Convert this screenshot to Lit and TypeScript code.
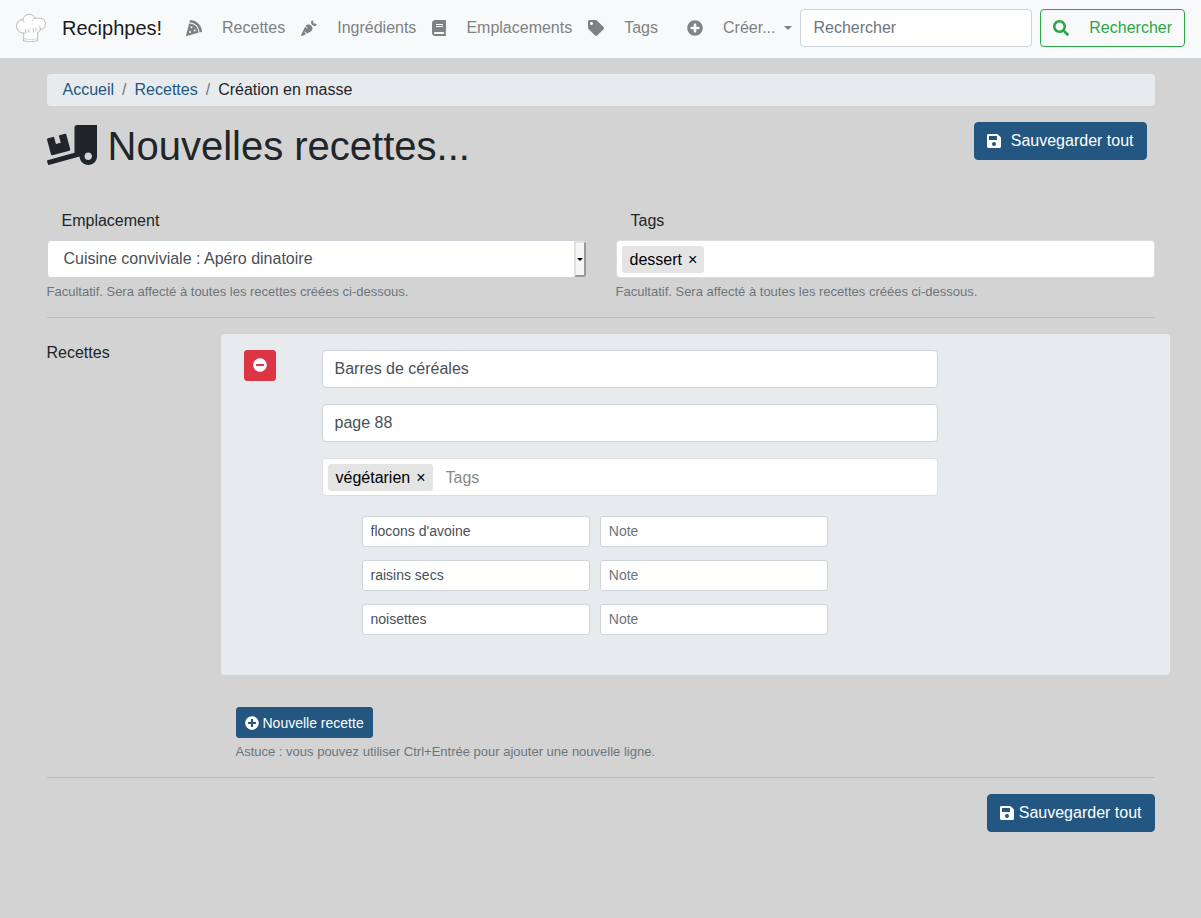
import { LitElement, html, css, svg } from "lit";
import { customElement, property, state } from "lit/decorators.js";

interface Glyph {
  width: number;
  path: string;
}

const GLYPHS: Record<string, Glyph> = {
  pizza: {
    width: 512,
    path: "M158.87.15c-16.16-1.52-31.2 8.42-35.33 24.12l-14.81 56.27c187.62 5.49 314.54 130.61 322.48 317l56.94-15.78c15.72-4.36 25.49-19.68 23.62-35.9C490.89 165.08 340.78 17.32 158.87.15zm-58.47 112L.55 491.64a16.21 16.21 0 0 0 20 19.75l379-105.1c-4.27-174.89-123.08-292.14-299.15-294.1zM128 416a32 32 0 1 1 32-32 32 32 0 0 1-32 32zm48-152a32 32 0 1 1 32-32 32 32 0 0 1-32 32zm104 104a32 32 0 1 1 32-32 32 32 0 0 1-32 32z",
  },
  carrot: {
    width: 512,
    path: "M298.2 156.6c-52.7-25.7-114.5-10.5-150.2 32.8l55.2 55.2c6.3 6.3 6.3 16.4 0 22.6-3.1 3.1-7.2 4.7-11.3 4.7s-8.2-1.6-11.3-4.7L130.4 217 2.3 479.7c-2.9 6-3.1 13.3 0 19.7 5.4 11.1 18.9 15.7 30 10.3l133.6-65.2-49.2-49.2c-6.3-6.2-6.3-16.4 0-22.6 6.3-6.2 16.4-6.2 22.6 0l57 57 102-49.8c24-11.7 44.5-31.3 57.1-57.1 30.1-61.7 4.5-136.1-57.2-166.2zm92.1-34.9C409.8 81 399.7 32.9 360 0c-50.3 41.7-52.5 107.5-7.9 151.9l8 8c44.4 44.6 110.3 42.4 151.9-7.9-32.9-39.7-81-49.8-121.7-30.3z",
  },
  book: {
    width: 448,
    path: "M448 360V24c0-13.3-10.7-24-24-24H96C43 0 0 43 0 96v320c0 53 43 96 96 96h328c13.3 0 24-10.7 24-24v-16c0-7.5-3.5-14.3-8.9-18.7-4.2-15.4-4.2-59.3 0-74.7 5.4-4.3 8.9-11.1 8.9-18.6zM128 134c0-3.3 2.7-6 6-6h212c3.3 0 6 2.7 6 6v20c0 3.3-2.7 6-6 6H134c-3.3 0-6-2.7-6-6v-20zm0 64c0-3.3 2.7-6 6-6h212c3.3 0 6 2.7 6 6v20c0 3.3-2.7 6-6 6H134c-3.3 0-6-2.7-6-6v-20zm253.4 250H96c-17.7 0-32-14.3-32-32 0-17.6 14.4-32 32-32h285.4c-1.9 17.1-1.9 46.9 0 64z",
  },
  tag: {
    width: 512,
    path: "M0 252.118V48C0 21.49 21.49 0 48 0h204.118a48 48 0 0 1 33.941 14.059l211.882 211.882c18.745 18.745 18.745 49.137 0 67.882L293.823 497.941c-18.745 18.745-49.137 18.745-67.882 0L14.059 286.059A48 48 0 0 1 0 252.118zM112 64c-26.51 0-48 21.49-48 48s21.49 48 48 48 48-21.49 48-48-21.49-48-48-48z",
  },
  plus: {
    width: 512,
    path: "M256 8C119 8 8 119 8 256s111 248 248 248 248-111 248-248S393 8 256 8zm144 276c0 6.6-5.4 12-12 12h-92v92c0 6.6-5.4 12-12 12h-56c-6.6 0-12-5.4-12-12v-92h-92c-6.6 0-12-5.4-12-12v-56c0-6.6 5.4-12 12-12h92v-92c0-6.6 5.4-12 12-12h56c6.6 0 12 5.4 12 12v92h92c6.6 0 12 5.4 12 12v56z",
  },
  minus: {
    width: 512,
    path: "M256 8C119 8 8 119 8 256s111 248 248 248 248-111 248-248S393 8 256 8zM124 296c-6.6 0-12-5.4-12-12v-56c0-6.6 5.4-12 12-12h264c6.6 0 12 5.4 12 12v56c0 6.6-5.4 12-12 12H124z",
  },
  search: {
    width: 512,
    path: "M505 442.7L405.3 343c-4.5-4.5-10.6-7-17-7H372c27.6-35.3 44-79.7 44-128C416 93.1 322.9 0 208 0S0 93.1 0 208s93.1 208 208 208c48.3 0 92.7-16.4 128-44v16.3c0 6.4 2.5 12.5 7 17l99.7 99.7c9.4 9.4 24.6 9.4 33.9 0l28.3-28.3c9.4-9.4 9.4-24.6.1-34zM208 336c-70.7 0-128-57.2-128-128 0-70.7 57.2-128 128-128 70.7 0 128 57.2 128 128 0 70.7-57.2 128-128 128z",
  },
  save: {
    width: 448,
    path: "M433.941 129.941l-83.882-83.882A48 48 0 0 0 316.118 32H48C21.49 32 0 53.49 0 80v352c0 26.51 21.49 48 48 48h352c26.51 0 48-21.49 48-48V163.882a48 48 0 0 0-14.059-33.941zM224 416c-35.346 0-64-28.654-64-64 0-35.346 28.654-64 64-64s64 28.654 64 64c0 35.346-28.654 64-64 64zm96-304.52V212c0 6.627-5.373 12-12 12H76c-6.627 0-12-5.373-12-12V108c0-6.627 5.373-12 12-12h228.52c3.183 0 6.235 1.264 8.485 3.515l3.48 3.48A11.996 11.996 0 0 1 320 111.48z",
  },
  truck: {
    width: 640,
    path: "M50.2 375.6c2.3 8.5 11.1 13.6 19.6 11.3l216.4-58c8.5-2.3 13.6-11.1 11.3-19.6l-49.7-185.5c-2.3-8.5-11.1-13.6-19.6-11.3L151 133.3l24.8 92.7-61.8 16.5-24.8-92.7-77.3 20.7C3.4 172.8-1.7 181.6.6 190.1l49.6 185.5zM384 0c-17.7 0-32 14.3-32 32v323.6L5.9 450c-4.3 1.2-6.8 5.6-5.6 9.8l12.6 46.3c1.2 4.3 5.6 6.8 9.8 5.6l393.7-107.4C418.8 464.1 467.6 512 528 512c61.9 0 112-50.1 112-112V0H384zm144 448c-26.5 0-48-21.5-48-48s21.5-48 48-48 48 21.5 48 48-21.5 48-48 48z",
  },
};

/* Solid glyph that scales with the font size of its parent. */
@customElement("app-icon")
class AppIcon extends LitElement {
  static styles = css`
    :host {
      display: inline-flex;
      flex: none;
    }
    svg {
      display: block;
      height: 1em;
      fill: currentColor;
    }
  `;

  @property() name = "plus";

  render() {
    const glyph = GLYPHS[this.name];
    return html`<svg viewBox="0 0 ${glyph.width} 512" aria-hidden="true">
      ${svg`<path d=${glyph.path}></path>`}
    </svg>`;
  }
}

/* Shared rules: resets, text boxes and buttons. */
const shared = css`
  * {
    box-sizing: border-box;
  }
  input,
  select,
  button {
    font: inherit;
    margin: 0;
  }
  a {
    text-decoration: none;
  }
  .control {
    display: block;
    width: 100%;
    height: 38px;
    padding: 6px 12px;
    color: #495057;
    background: #fff;
    border: 1px solid #ced4da;
    border-radius: 4px;
    outline-color: #80bdff;
  }
  .control::placeholder {
    color: #6c757d;
    opacity: 1;
  }
  .control.small {
    height: 31px;
    padding: 3px 8px 5px;
    font-size: 14px;
    border-radius: 3px;
  }
  .btn {
    display: inline-flex;
    align-items: center;
    height: 38px;
    padding: 0 12px;
    border: 1px solid transparent;
    border-radius: 4px;
    cursor: pointer;
    white-space: nowrap;
  }
  .btn.primary {
    color: #fff;
    background: #235681;
    border-color: #235681;
    gap: 5px;
  }
  .btn.danger {
    color: #fff;
    background: #dc3545;
    border-color: #dc3545;
  }
  .btn.success {
    color: #28a745;
    background: transparent;
    border-color: #28a745;
    gap: 20px;
  }
  .btn.small {
    height: 31px;
    padding: 0 8px;
    gap: 4px;
    font-size: 14px;
    border-radius: 3px;
  }
  .btn.danger.small {
    padding-bottom: 2px;
  }
`;

/* Text box holding removable chips. */
@customElement("tag-box")
class TagBox extends LitElement {
  static styles = [
    shared,
    css`
      :host {
        display: block;
      }
      .box {
        display: flex;
        align-items: center;
        height: 38px;
        padding: 0 5px;
        gap: 5px;
        background: #fff;
        border: 1px solid #dcdee1;
        border-radius: 4px;
      }
      .chip {
        display: flex;
        align-items: center;
        height: 27px;
        padding: 1px 7px 0 8px;
        gap: 6px;
        color: #000;
        background: #e4e4e4;
        border-radius: 3px;
      }
      .remove {
        padding: 0;
        border: 0;
        background: none;
        color: inherit;
        cursor: pointer;
      }
      .entry {
        flex: 1;
        min-width: 0;
        padding: 1px 8px 0;
        border: 0;
        outline: 0;
        background: none;
      }
      .entry::placeholder {
        color: #888;
        opacity: 1;
      }
    `,
  ];

  @property({ attribute: false }) tags: string[] = [];
  @property() placeholder = "";

  private remove(tag: string) {
    this.tags = this.tags.filter((other) => other !== tag);
  }

  render() {
    return html`<div class="box">
      ${this.tags.map(
        (tag) => html`<span class="chip"
          >${tag}<button
            class="remove"
            type="button"
            aria-label="Retirer ${tag}"
            @click=${() => this.remove(tag)}
          >
            ×
          </button></span
        >`
      )}
      <input class="entry" type="text" aria-label="Tags" placeholder=${this.placeholder} />
    </div>`;
  }
}

@customElement("nav-bar")
class NavBar extends LitElement {
  static styles = [
    shared,
    css`
      :host {
        display: block;
      }
      .bar {
        display: flex;
        align-items: center;
        height: 58px;
        padding: 0 16px 2px;
        background: #f8f9fb;
      }
      .brand {
        display: flex;
        align-items: center;
        gap: 16px;
        margin-right: 16px;
        font-size: 20px;
        color: #1b1c1d;
      }
      .logo {
        width: 30px;
        height: 30px;
      }
      .links {
        display: flex;
        margin: 0;
        padding: 0;
        list-style: none;
      }
      .link {
        display: flex;
        align-items: center;
        gap: 20px;
        padding: 8px;
        color: #808182;
        white-space: nowrap;
      }
      .menu {
        margin-left: 13px;
        border: 0;
        background: none;
        cursor: pointer;
      }
      .label {
        display: flex;
        align-items: center;
        gap: 9px;
      }
      .caret {
        border: 4px solid transparent;
        border-top-color: currentColor;
        border-bottom: 0;
      }
      .search {
        display: flex;
        flex: 1;
        gap: 8px;
      }
      .field {
        flex: 1;
        min-width: 0;
      }
    `,
  ];

  private links = [
    { icon: "pizza", text: "Recettes" },
    { icon: "carrot", text: "Ingrédients" },
    { icon: "book", text: "Emplacements" },
    { icon: "tag", text: "Tags" },
  ];

  render() {
    return html`<nav class="bar">
      <a class="brand" href="#">
        <svg class="logo" viewBox="0 0 30 30" aria-hidden="true" fill="#fff" stroke="#acadaf" stroke-width="0.8" stroke-linecap="round" stroke-linejoin="round">
          <path d="M7.600 27.800 7.800 20.200C3.600 20.200.5 17.200.5 13.200.5 8.800 3.400 6.100 7 6.300 7.600 3.200 10 1.300 13.200 1.300c2.900 0 5 1.500 5.800 4 .8-.3 1.800-.3 2.600 0 4.200-.6 7.800 1.300 7.900 5.300.1 3.500-2.200 5.700-5.300 6.100-.6 1.400-1.500 2.400-2.600 2.900l.1 8c-3.200 1.100-11 1.300-14.100.2z" />
          <path fill="none" d="M7 6.300c-.3 1.200.1 2.200.9 3M19 5.300c-1.200.4-2 1.100-2.400 2M9.400 16.400l.5 2.400M12.600 16.500l.2 2.600M17.300 15.600l.2 3.500M20.300 15.500l-.5 2.600M23.600 13.500c.8 1.100 1 2 .6 3.200M7.800 20.200c1.300.1 2.300-.4 3-1.200" />
          <path fill="none" stroke="#c9cacb" d="M1.400 15.600c.8 2.200 2.800 4 5.400 4.200M8.600 25.800c4 1 9.300.9 12.700-.2M2 10c.8-1.500 2-2.400 3.600-2.700" />
        </svg>
        Reciphpes!
      </a>
      <ul class="links">
        ${this.links.map(
          (link) => html`<li>
            <a class="link" href="#"><app-icon name=${link.icon}></app-icon>${link.text}</a>
          </li>`
        )}
        <li>
          <button class="link menu" type="button" aria-haspopup="true">
            <app-icon name="plus"></app-icon>
            <span class="label">Créer...<span class="caret"></span></span>
          </button>
        </li>
      </ul>
      <form class="search" role="search" @submit=${(e: Event) => e.preventDefault()}>
        <input class="control field" type="search" placeholder="Rechercher" aria-label="Rechercher" />
        <button class="btn success" type="submit">
          <app-icon name="search"></app-icon>Rechercher
        </button>
      </form>
    </nav>`;
  }
}

@customElement("app-root")
class AppRoot extends LitElement {
  static styles = [
    shared,
    css`
      :host {
        display: block;
        min-height: 100vh;
        background: #d3d3d3;
        color: #212529;
        font: 16px/24px "Liberation Sans", Arial, sans-serif;
      }
      .page {
        max-width: 1140px;
        margin: 0 auto;
        padding: 16px;
      }
      .crumbs {
        display: flex;
        gap: 8px;
        margin: 0 0 16px;
        padding: 4px 16px;
        list-style: none;
        background: #e8ebee;
        border-radius: 4px;
      }
      .crumb {
        display: flex;
        gap: 8px;
      }
      .crumb + .crumb::before {
        content: "/";
        color: #6c757d;
      }
      .crumb a {
        color: #235681;
      }
      .head {
        display: flex;
        justify-content: space-between;
        align-items: flex-start;
        padding-right: 8px;
        margin-bottom: 39px;
      }
      .title {
        display: flex;
        align-items: center;
        gap: 11px;
        margin: 0;
        font-size: 40px;
        line-height: 48px;
        font-weight: 400;
      }
      .title app-icon {
        padding-bottom: 2px;
      }
      .head .primary {
        gap: 10px;
      }
      .columns {
        display: grid;
        grid-template-columns: 1fr 1fr;
        gap: 30px;
      }
      .field-label {
        display: block;
        margin-bottom: 7px;
        padding: 0 15px;
      }
      .picker {
        position: relative;
      }
      .select {
        appearance: none;
        padding: 0 16px;
      }
      .arrow {
        position: absolute;
        top: 1px;
        right: 0;
        bottom: 1px;
        display: grid;
        place-items: center;
        width: 12px;
        border: 2px solid;
        border-color: #e0e0e0 #979797 #979797 #e0e0e0;
        border-radius: 0 3px 3px 0;
        background: #f6f5f4;
        pointer-events: none;
      }
      .arrow::after {
        content: "";
        border: 3px solid transparent;
        border-top-color: #000;
        border-bottom: 0;
      }
      .hint {
        margin: 4px 0 0;
        font-size: 13px;
        line-height: 20px;
        color: #6c757d;
      }
      .rule {
        height: 1px;
        margin: 15px 0 16px;
        border: 0;
        background: #bebebe;
      }
      .recipes {
        display: grid;
        grid-template-columns: 174px minmax(0, 1fr);
        margin-right: -15px;
      }
      .legend {
        padding-top: 7px;
      }
      .panel {
        display: flex;
        gap: 22px;
        padding: 16px 0 40px;
        background: #e8ebee;
        border-radius: 4px;
      }
      .side {
        flex: none;
        width: 79px;
        text-align: center;
      }
      .fields {
        display: grid;
        gap: 16px;
        width: 65%;
      }
      .ingredients {
        display: grid;
        gap: 13px;
        margin: 4px 0 0;
        padding: 0 15px 0 40px;
        list-style: none;
      }
      .ingredient {
        display: grid;
        grid-template-columns: repeat(12, minmax(0, 1fr));
        gap: 10px;
      }
      .ingredient .control {
        grid-column: span 5;
      }
      .add {
        grid-column: 2;
        padding: 32px 15px 0;
      }
      .add .btn {
        display: flex;
      }
      .actions {
        display: flex;
        justify-content: flex-end;
      }
    `,
  ];

  @state() private ingredients = ["flocons d'avoine", "raisins secs", "noisettes"];

  private addIngredient(event: KeyboardEvent) {
    if (event.ctrlKey && event.key === "Enter") {
      this.ingredients = [...this.ingredients, ""];
    }
  }

  render() {
    return html`
      <nav-bar></nav-bar>
      <main class="page">
        <ol class="crumbs">
          <li class="crumb"><a href="#">Accueil</a></li>
          <li class="crumb"><a href="#">Recettes</a></li>
          <li class="crumb">Création en masse</li>
        </ol>
        <header class="head">
          <h1 class="title"><app-icon name="truck"></app-icon>Nouvelles recettes...</h1>
          <button class="btn primary" type="button">
            <app-icon name="save"></app-icon>Sauvegarder tout
          </button>
        </header>

        <div class="columns">
          <div>
            <label class="field-label" for="place">Emplacement</label>
            <div class="picker">
              <select class="control select" id="place">
                <option>Cuisine conviviale : Apéro dinatoire</option>
              </select>
              <span class="arrow"></span>
            </div>
            <p class="hint">Facultatif. Sera affecté à toutes les recettes créées ci-dessous.</p>
          </div>
          <div>
            <span class="field-label">Tags</span>
            <tag-box .tags=${["dessert"]}></tag-box>
            <p class="hint">Facultatif. Sera affecté à toutes les recettes créées ci-dessous.</p>
          </div>
        </div>

        <hr class="rule" />

        <section class="recipes">
          <div class="legend">Recettes</div>
          <div class="panel">
            <div class="side">
              <button class="btn danger small" type="button" aria-label="Retirer la recette">
                <app-icon name="minus"></app-icon>
              </button>
            </div>
            <div class="fields">
              <input class="control" type="text" aria-label="Nom" .value=${"Barres de céréales"} />
              <input class="control" type="text" aria-label="Page" .value=${"page 88"} />
              <tag-box .tags=${["végétarien"]} placeholder="Tags"></tag-box>
              <ul class="ingredients" @keydown=${this.addIngredient}>
                ${this.ingredients.map(
                  (name) => html`<li class="ingredient">
                    <input class="control small" type="text" aria-label="Ingrédient" .value=${name} />
                    <input class="control small" type="text" aria-label="Note" placeholder="Note" />
                  </li>`
                )}
              </ul>
            </div>
          </div>
          <div class="add">
            <button class="btn primary small" type="button">
              <app-icon name="plus"></app-icon>Nouvelle recette
            </button>
            <p class="hint">Astuce : vous pouvez utiliser Ctrl+Entrée pour ajouter une nouvelle ligne.</p>
          </div>
        </section>

        <hr class="rule" />

        <div class="actions">
          <button class="btn primary" type="button">
            <app-icon name="save"></app-icon>Sauvegarder tout
          </button>
        </div>
      </main>
    `;
  }
}
